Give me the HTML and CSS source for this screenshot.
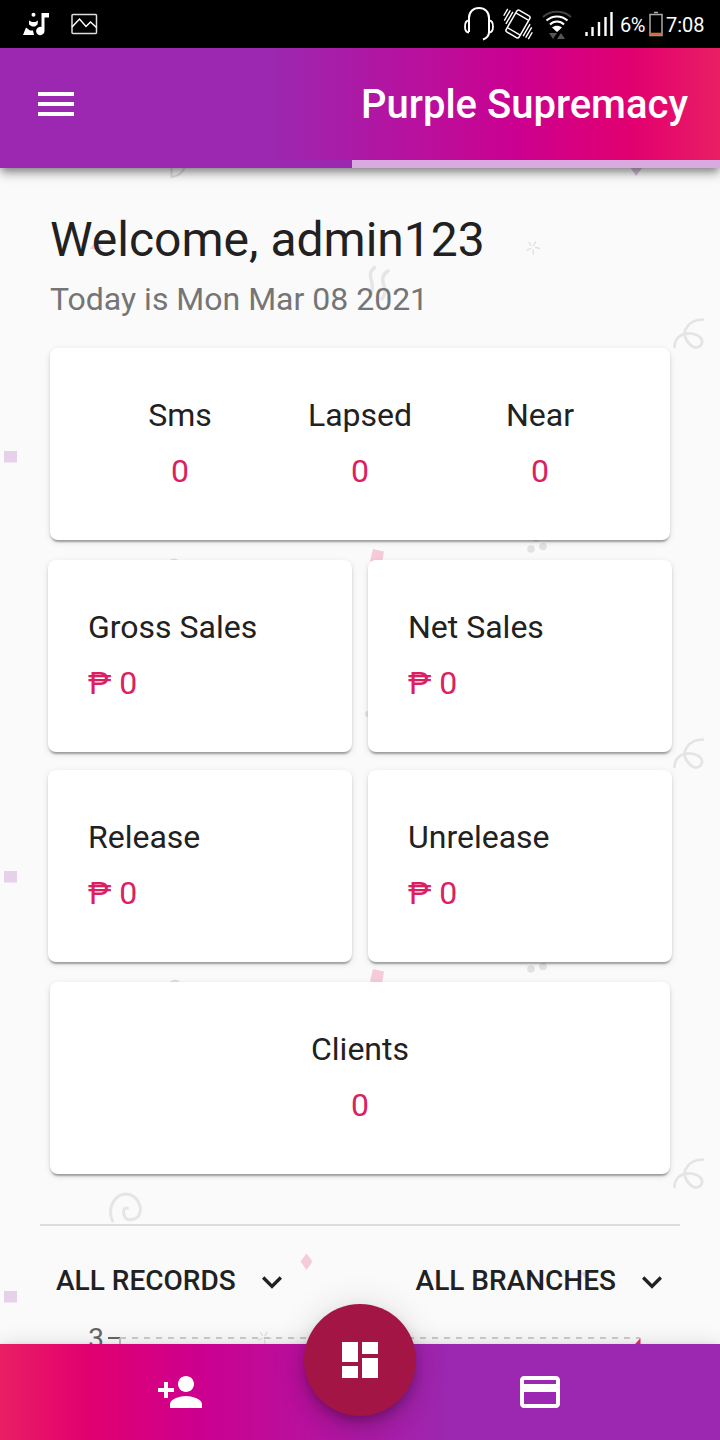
FILE: index.html
```html
<!DOCTYPE html>
<html lang="en">
<head>
<meta charset="utf-8">
<title>Purple Supremacy</title>
<link rel="stylesheet" href="styles.css">
</head>
<body>
<div class="app">
  <div class="status">
    <svg class="status-left" width="110" height="48" viewBox="0 0 110 48">
      <g fill="#fff">
        <circle cx="33.500" cy="14.800" r="2"/>
        <path d="M29 20.500l3 1.500h3.500l2.500-1.500-.5 4-2.500 2h-3l-3-2zM26 27.500l4 3h3l1 4.500H23zM41.500 13H49v4.500h-4.500V31a4.200 4.200 0 1 1-3-4z"/>
      </g>
      <rect x="72" y="14.500" width="24.500" height="19" rx="1" fill="none" stroke="#ddd" stroke-width="1.500"/>
      <path d="M72 27l7.500-8 6.500 7.500 4.500-4.500 6 5.500" fill="none" stroke="#fff" stroke-width="1.500"/>
    </svg>
    <div class="status-right">
      <svg width="154" height="48" viewBox="462 0 154 48" fill="none" stroke="#fff">
        <path d="M469 32V18c0-6 4-10 10-10s10 4 10 10v14c0 4-2 6-6 7.500" stroke-width="2"/>
        <path d="M469 20.500c-2.500 0-4 2-4 6s1.500 6 4 6M489 20.500c2.500 0 4 2 4 6s-1.500 6-4 6" stroke-width="1.800"/>
        <g transform="rotate(30 518 24)" stroke-width="1.500">
          <rect x="510.500" y="11.500" width="15" height="25" rx="2"/><path d="M511 15.500h14M511 32.500h14" stroke-width="1.300"/><path d="M507.500 16v14M504.500 16v12M501.500 16v8M528.500 18v14M531.500 20v12M534.500 24v8" stroke-width="1.400"/>
        </g>
        <path d="M543 17c8-7 20-7 28 0" stroke="#444" stroke-width="2"/>
        <path d="M546.500 20.500c6-5.500 15-5.500 21 0M550 24.500c4-4 10-4 14 0" stroke-width="2"/>
        <path d="M552 27.500c3-2.500 7-2.500 10 0l-5 4.500z" fill="#fff" stroke="none"/>
        <path d="M549 33h8l-4 6zM557 39l4-6 4 6z" fill="#555" stroke="none"/>
        <path d="M586.500 36v-4M592.500 36v-9M599 36V22M605.500 36V17M611.500 36V12" stroke-width="2.400"/>
      </svg>
      <span class="battery-text">6%</span>
      <svg class="battery" width="14" height="48" viewBox="0 0 14 48">
        <path d="M5 12.500h4" stroke="#aaa" stroke-width="1.500"/>
        <rect x="1" y="14.500" width="12" height="21" fill="none" stroke="#aaa" stroke-width="1.500"/>
        <path d="M1 34.200h12" stroke="#d66b43" stroke-width="3"/>
      </svg>
      <span class="clock">7:08</span>
    </div>
  </div>

  <header class="header">
    <div class="toolbar">
      <svg class="menu" width="48" height="48" viewBox="0 0 24 24" fill="#fff"><path d="M3 18h18v-2H3v2zm0-5h18v-2H3v2zm0-7v2h18V6H3z"/></svg>
      <h1 class="title">Purple Supremacy</h1>
    </div>
    <div class="tabs"><span class="tab-on"></span><span class="tab-off"></span></div>
  </header>

  <main class="content">
    <svg class="confetti" width="720" height="1272" viewBox="0 168 720 1272">
      <defs>
        <g id="loop" fill="none" stroke="#e4e4e4" stroke-width="2.700" stroke-linecap="round"><path d="M674.500 347c0-9 7-14 15-13.500 9 .5 13.500 5 12.500 9-1.500 6-8 6.500-12 2-6-6-7-12-3-17.500 4-6 9-7.500 16-7.500"/></g>
        <g id="burst" stroke="#dedede" stroke-width="1.300" stroke-linecap="round"><path d="M529 242.500l2 3M535.500 242l-2 3.500M527 250l3.500-1.500M535.500 247.500l4 .8M533 250l.5 4"/></g>
      </defs>
      <path d="M171.500 168v9c7-1 11-4 13-9" fill="none" stroke="#ddd" stroke-width="2"/>
      <path d="M630 167h13l-7 9z" fill="#d8bddd"/>
      <path d="M90 249l6-9 7 9z" fill="#f8c9d7"/>
      <use href="#burst"/><use href="#burst" x="-268.500" y="1090"/>
      <path d="M374.500 267.500c-10 8 2 16-3.500 25M388 271c-13 9 3 17-6 28" fill="none" stroke="#e5e5e5" stroke-width="3.500" stroke-linecap="round"/>
      <use href="#loop"/><use href="#loop" y="420"/><use href="#loop" y="840"/>
      <g fill="#e6d0ea"><path d="M4 451h13v11.500H4zM4 871h13v11.500H4zM4 1291h13v11.500H4z"/><path d="M581 1273l5-2 2 4-3 3z"/></g>
      <g fill="#f6cbd9"><path d="M373 549l11 2.500-2 12-12-2zM373 969l11 2.500-2 12-12-2zM306.500 1253.500l6 8-6 8.500-6-8.500z"/></g>
      <g fill="#e2e2e2"><circle cx="531" cy="549" r="3.800"/><circle cx="543" cy="546.500" r="3.800"/><circle cx="536" cy="538" r="3.800"/><circle cx="531" cy="969" r="3.800"/><circle cx="543" cy="966.500" r="3.800"/><circle cx="368" cy="714" r="3"/></g>
      <path d="M170 561q4-3 8 0M170 983q4-4 9-1" fill="none" stroke="#ddd" stroke-width="2"/>
      <path d="M112.500 1221c-6-14 3-27 14-27 11 1 16 13 13 20-2 6-13 8-15 2-2-5-1-8 3-8" fill="none" stroke="#e5e5e5" stroke-width="3" stroke-linecap="round"/>
    </svg>

    <section class="greeting">
      <h2 class="welcome">Welcome, admin123</h2>
      <p class="date">Today is Mon Mar 08 2021</p>
    </section>

    <section class="card wide stats">
      <div><p class="label">Sms</p><p class="value">0</p></div>
      <div><p class="label">Lapsed</p><p class="value">0</p></div>
      <div><p class="label">Near</p><p class="value">0</p></div>
    </section>
    <section class="sales">
      <div class="card"><p class="label">Gross Sales</p><p class="value">₱ 0</p></div>
      <div class="card"><p class="label">Net Sales</p><p class="value">₱ 0</p></div>
      <div class="card"><p class="label">Release</p><p class="value">₱ 0</p></div>
      <div class="card"><p class="label">Unrelease</p><p class="value">₱ 0</p></div>
    </section>
    <section class="card wide clients"><p class="label">Clients</p><p class="value">0</p></section>

    <hr class="rule">
    <div class="filters">
      <div class="filter"><span>ALL RECORDS</span><svg width="40" height="40" viewBox="0 0 24 24" fill="#212121"><path d="M16.590 8.590L12 13.170 7.410 8.590 6 10l6 6 6-6z"/></svg></div>
      <div class="filter"><span>ALL BRANCHES</span><svg width="40" height="40" viewBox="0 0 24 24" fill="#212121"><path d="M16.590 8.590L12 13.170 7.410 8.590 6 10l6 6 6-6z"/></svg></div>
    </div>
    <svg class="chart" width="640" height="60" viewBox="40 1320 640 60">
      <text class="tick" x="104" y="1348" text-anchor="end">3</text>
      <path d="M108 1338h12" stroke="#666" stroke-width="2"/>
      <path d="M120 1338v40" stroke="#bbb" stroke-width="2"/>
      <path d="M120 1338h520" stroke="#ccc" stroke-width="2" stroke-dasharray="6 6"/>
      <path d="M628 1352l12.500-14v14z" fill="#e33168"/>
    </svg>
  </main>

  <nav class="nav">
    <svg class="add" width="48" height="48" viewBox="0 0 24 24" fill="#fff"><path d="M15 12c2.210 0 4-1.790 4-4s-1.790-4-4-4-4 1.790-4 4 1.790 4 4 4zm-9-2V7H4v3H1v2h3v3h2v-3h3v-2H6zm9 4c-2.670 0-8 1.340-8 4v2h16v-2c0-2.660-5.330-4-8-4z"/></svg>
    <svg class="pay" width="48" height="48" viewBox="0 0 24 24" fill="#fff"><path d="M20 4H4c-1.110 0-1.990.89-1.990 2L2 18c0 1.110.89 2 2 2h16c1.110 0 2-.89 2-2V6c0-1.110-.89-2-2-2zm0 14H4v-6h16v6zm0-10H4V6h16v2z"/></svg>
    <div class="fab"><svg width="48" height="48" viewBox="0 0 24 24" fill="#fff"><path d="M3 13h8V3H3v10zm0 8h8v-6H3v6zm10 0h8V11h-8v10zm0-18v6h8V3h-8z"/></svg></div>
  </nav>
</div>
</body>
</html>
```

FILE: styles.css
```css
* { box-sizing: border-box; }
body, h1, h2, p { margin: 0; font-weight: 400; }
body { font-family: Roboto, "Liberation Sans", sans-serif; background: #fafafa; color: #212121; }
svg { display: block; flex: none; }
.app { width: 720px; height: 1440px; display: flex; flex-direction: column; overflow: hidden; }

.status { height: 48px; flex: none; background: #000; color: #fff; display: flex; justify-content: space-between; position: relative; z-index: 3; }
.status-right { display: flex; align-items: center; padding-right: 15px; font-size: 20px; line-height: 48px; }
.battery-text { width: 29px; margin-left: 4px; white-space: nowrap; letter-spacing: -.6px; padding-top: 2px; }
.battery { margin-right: 3px; }
.clock { width: 39px; white-space: nowrap; padding-top: 2px; }

.header { height: 120px; flex: none; display: flex; flex-direction: column; background: linear-gradient(270deg, #e91e63 0%, #e2006f 12%, #cc0090 28%, #9c27b0 62%); box-shadow: 0 4px 8px -2px rgba(0,0,0,.3), 0 8px 10px rgba(0,0,0,.14), 0 2px 10px rgba(0,0,0,.2); position: relative; z-index: 2; }
.toolbar { height: 112px; display: flex; align-items: center; justify-content: space-between; padding: 0 32px; }
.title { font-size: 40px; font-weight: 500; color: #fff; white-space: nowrap; }
.tabs { display: flex; height: 8px; }
.tab-on { width: 352px; background: #9c27b0; }
.tab-off { flex: 1; background: #d9aadf; }

.content { height: 1176px; flex: none; overflow: hidden; position: relative; display: flex; flex-direction: column; align-items: center; isolation: isolate; }
.confetti { position: absolute; top: 0; left: 0; z-index: -1; }
.greeting { width: 620px; height: 180px; flex: none; padding-top: 40px; }
.welcome { font-size: 48px; line-height: 64px; }
.date { font-size: 32px; line-height: 54px; color: #757575; }

.card { height: 192px; background: #fff; border-radius: 8px; padding: 39px 40px 40px; box-shadow: 0 4px 2px -2px rgba(0,0,0,.2), 0 2px 2px rgba(0,0,0,.14), 0 2px 6px rgba(0,0,0,.12); }
.label, .value { font-size: 32px; line-height: 56px; white-space: nowrap; }
.value { color: #dc1f61; }
.wide { width: 620px; flex: none; text-align: center; }
.stats { display: grid; grid-template-columns: repeat(3, 180px); }
.sales { width: 624px; flex: none; display: grid; grid-template-columns: 304px 304px; gap: 18px 16px; margin: 20px 0; }
.rule { width: 640px; height: 2px; flex: none; border: 0; background: #dcdcdc; margin: 50px 0 0; }
.filters { width: 640px; height: 94px; flex: none; padding: 33px 8px 0 16px; display: flex; justify-content: space-between; align-items: flex-start; }
.filter { display: flex; align-items: center; height: 42px; font-size: 28px; font-weight: 500; gap: 16px; white-space: nowrap; }
.filter svg { margin-top: 4px; }
.tick { font-size: 28px; fill: #666; }

.nav { height: 96px; flex: none; display: flex; justify-content: space-between; align-items: center; padding: 0 156px; background: linear-gradient(90deg, #e91e63 0%, #e2006f 12%, #cc0090 28%, #9c27b0 62%); box-shadow: 0 4px 8px rgba(0,0,0,.2), 0 0 20px rgba(0,0,0,.12); position: relative; z-index: 2; }
.fab { position: absolute; left: 304px; top: -40px; width: 112px; height: 112px; border-radius: 50%; background: #a31545; display: flex; align-items: center; justify-content: center; box-shadow: 0 6px 10px -2px rgba(0,0,0,.2), 0 12px 20px rgba(0,0,0,.14), 0 2px 36px rgba(0,0,0,.12); }
```
